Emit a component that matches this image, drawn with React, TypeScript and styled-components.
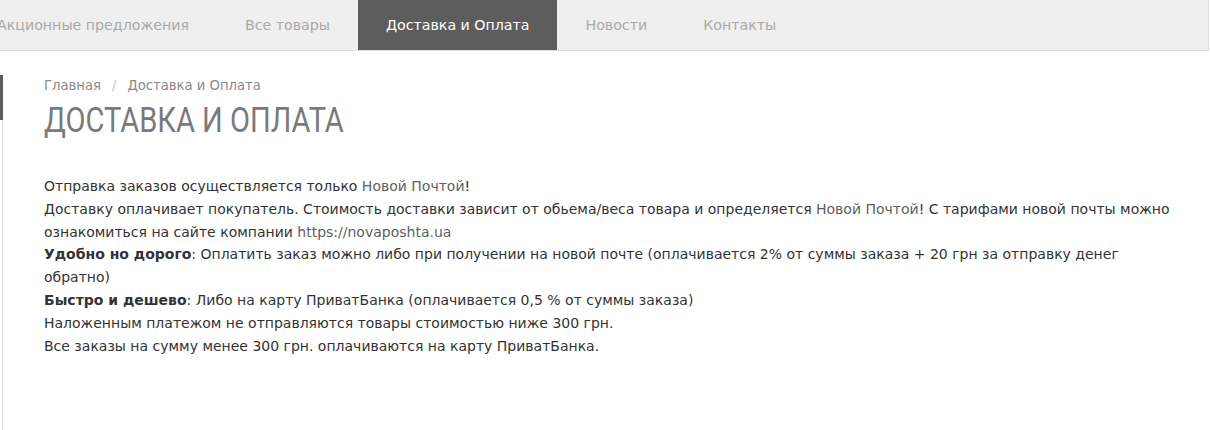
import React from "react";
import styled, { createGlobalStyle } from "styled-components";

const Global = createGlobalStyle`
  html, body { margin: 0; padding: 0; background: #fff; }
  body { font-family: "DejaVu Sans", sans-serif; overflow: hidden; }
`;

const Page = styled.div`
  width: 1210px;
  height: 430px;
  display: flex;
  flex-direction: column;
  overflow: hidden;
`;

const NavBar = styled.nav`
  width: 1208px;
  height: 50px;
  background: #efefef;
  border-bottom: 1px solid #dcdcdc;
  border-right: 1px solid #dcdcdc;
  display: flex;
  flex-shrink: 0;
  overflow: hidden;
`;

const NavList = styled.ul`
  display: flex;
  margin: 0 0 0 -31px;
  padding: 0;
  list-style: none;
`;

const NavItem = styled.li<{ $active?: boolean }>`
  display: flex;
  align-items: center;
  padding: 0 28px;
  height: 50px;
  font-family: Tahoma, "DejaVu Sans", sans-serif;
  font-size: 14.2px;
  color: ${(p) => (p.$active ? "#fff" : "#a9a9a9")};
  background: ${(p) => (p.$active ? "#5d5d5d" : "transparent")};
  white-space: nowrap;
`;

const Body = styled.div`
  display: flex;
  flex: 1;
`;

const Sidebar = styled.aside`
  width: 3px;
  margin-top: 24px;
  display: flex;
  flex-direction: column;
`;

const SideActive = styled.div`
  height: 45px;
  background: #5d5d5d;
`;

const SideRest = styled.div`
  flex: 1;
  width: 1px;
  margin-left: 2px;
  background: #dedede;
`;

const Content = styled.main`
  padding: 25px 0 0 41px;
  width: 1140px;
`;

const Crumbs = styled.div`
  font-family: Tahoma, "DejaVu Sans", sans-serif;
  font-size: 13.2px;
  color: #8a8a8a;
  line-height: 20px;
  display: flex;
  gap: 11px;
`;

const Sep = styled.span`
  color: #c4c4c4;
`;

const Title = styled.h1`
  margin: 5px 0 0;
  font-family: Roboto, sans-serif;
  font-weight: 400;
  font-size: 35px;
  line-height: 40px;
  color: #7a7a7a;
  display: inline-block;
  transform: scaleX(0.83);
  transform-origin: left center;
  white-space: nowrap;
`;

const Text = styled.div`
  margin-top: 34px;
  font-family: Tahoma, "DejaVu Sans", sans-serif;
  font-size: 14px;
  line-height: 22.8px;
  color: #333;
`;

const Line = styled.div``;

const Link = styled.span`
  color: #5f5f5f;
`;

const B = styled.b`
  font-weight: 700;
  color: #333;
`;

export default function App() {
  return (
    <Page>
      <Global />
      <NavBar>
        <NavList>
          <NavItem>Акционные предложения</NavItem>
          <NavItem>Все товары</NavItem>
          <NavItem $active>Доставка и Оплата</NavItem>
          <NavItem>Новости</NavItem>
          <NavItem>Контакты</NavItem>
        </NavList>
      </NavBar>
      <Body>
        <Sidebar>
          <SideActive />
          <SideRest />
        </Sidebar>
        <Content>
          <Crumbs>
            <span>Главная</span>
            <Sep>/</Sep>
            <span>Доставка и Оплата</span>
          </Crumbs>
          <Title>ДОСТАВКА И ОПЛАТА</Title>
          <Text>
            <Line>
              Отправка заказов осуществляется только <Link>Новой Почтой</Link>!
            </Line>
            <Line>
              Доставку оплачивает покупатель. Стоимость доставки зависит от обьема/веса товара и определяется{" "}
              <Link>Новой Почтой</Link>! С тарифами новой почты можно ознакомиться на сайте компании{" "}
              <Link>https://novaposhta.ua</Link>
            </Line>
            <Line>
              <B>Удобно но дорого</B>: Оплатить заказ можно либо при получении на новой почте (оплачивается 2% от суммы
              заказа + 20 грн за отправку денег обратно)
            </Line>
            <Line>
              <B>Быстро и дешево</B>: Либо на карту ПриватБанка (оплачивается 0,5 % от суммы заказа)
            </Line>
            <Line>Наложенным платежом не отправляются товары стоимостью ниже 300 грн.</Line>
            <Line>Все заказы на сумму менее 300 грн. оплачиваются на карту ПриватБанка.</Line>
          </Text>
        </Content>
      </Body>
    </Page>
  );
}
